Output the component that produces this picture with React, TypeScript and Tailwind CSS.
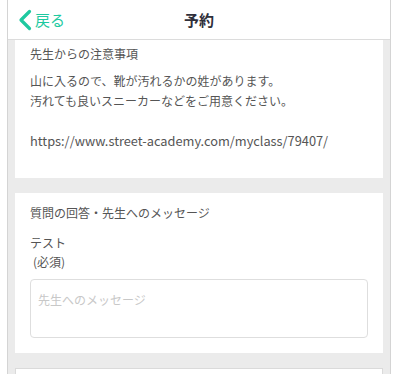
export default function App() {
    const font = { fontFamily: '"Noto Sans CJK JP", "Noto Sans", sans-serif' };

    return (
        <div className="w-[395px] h-[374px] overflow-hidden bg-white" style={font}>
            <div className="ml-[7px] w-[384px] h-full border-x border-[#d4d4d4] bg-[#ebebeb] flex flex-col">
                {/* Header */}
                <div className="relative h-[40px] shrink-0 bg-white border-b border-[#dcdcdc] flex items-center">
                    <div className="flex items-center pl-[10px] text-[#1ec9a0]">
                        <svg width="14" height="22" viewBox="0 0 14 22" fill="none">
                            <path d="M11.5 2.5 L3 11 L11.5 19.5" stroke="currentColor" strokeWidth="3.2" strokeLinecap="round" strokeLinejoin="round" />
                        </svg>
                        <span className="ml-[3px] text-[15px] leading-none">戻る</span>
                    </div>
                    <div className="absolute inset-0 flex items-center justify-center pointer-events-none">
                        <span className="text-[15px] font-bold text-[#2f2f3a] leading-none">予約</span>
                    </div>
                </div>

                <div className="px-[7px] flex flex-col gap-[15px]">
                    {/* Notice card */}
                    <div className="bg-white px-[15px] pt-[4px] pb-[27px] text-[12px] leading-[20px] text-[#555]">
                        <div>先生からの注意事項</div>
                        <div className="mt-[7px]">
                            <div>山に入るので、靴が汚れるかの姓があります。</div>
                            <div>汚れても良いスニーカーなどをご用意ください。</div>
                            <div className="h-[20px]" />
                            <div className="text-[12.8px]">https://www.street-academy.com/myclass/79407/</div>
                        </div>
                    </div>

                    {/* Message card */}
                    <div className="bg-white px-[15px] pt-[10px] pb-[15px] text-[12px] leading-[20px] text-[#555]">
                        <div>質問の回答・先生へのメッセージ</div>
                        <div className="mt-[10px]">テスト</div>
                        <div className="pl-[3px] -mt-[1px]">(必須)</div>
                        <textarea
                            placeholder="先生へのメッセージ"
                            className="mt-[7px] block w-full h-[59px] resize-none rounded-[4px] border border-[#dedede] px-[7px] pt-[10px] text-[12px] leading-[20px] placeholder:text-[#c8c8c8] outline-none"
                        />
                    </div>

                    {/* Next card (cut off) */}
                    <div className="bg-white border border-[#dadada] h-[40px]" />
                </div>
            </div>
        </div>
    );
}
